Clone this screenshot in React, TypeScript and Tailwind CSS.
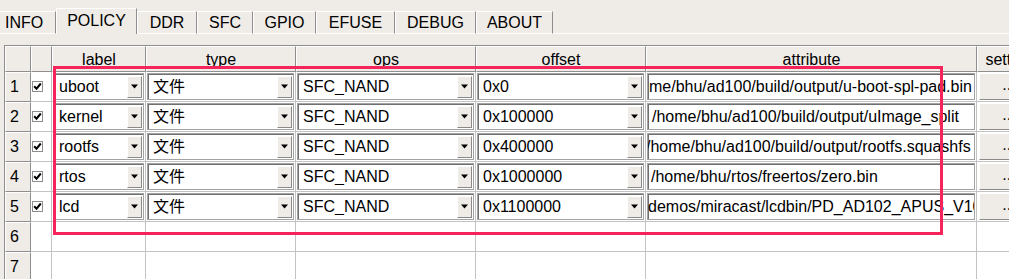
import React from 'react';

const tabs = [
  { name: 'INFO', w: 56 },
  { name: 'POLICY', w: 81, active: true },
  { name: 'DDR', w: 60 },
  { name: 'SFC', w: 56 },
  { name: 'GPIO', w: 63 },
  { name: 'EFUSE', w: 79 },
  { name: 'DEBUG', w: 81 },
  { name: 'ABOUT', w: 77 },
];

const rows = [
  { label: 'uboot', offset: '0x0', attr: 'me/bhu/ad100/build/output/u-boot-spl-pad.bin', pad: 'pl-[1px]' },
  { label: 'kernel', offset: '0x100000', attr: '/home/bhu/ad100/build/output/uImage_split', pad: 'pl-[4px]' },
  { label: 'rootfs', offset: '0x400000', attr: '/home/bhu/ad100/build/output/rootfs.squashfs', pad: 'pl-0 -ml-[2px]' },
  { label: 'rtos', offset: '0x1000000', attr: '/home/bhu/rtos/freertos/zero.bin', pad: 'pl-[3px]' },
  { label: 'lcd', offset: '0x1100000', attr: 'demos/miracast/lcdbin/PD_AD102_APUS_V10_800x480.bin', pad: 'pl-0' },
];

const gridCols = 'grid grid-cols-[26px_21px_94px_150px_180px_170px_331px_64px]';
const headBevel = 'border-t border-l border-t-white border-l-white border-r border-b border-r-[#8e8e8e] border-b-[#8e8e8e] bg-[#efebe7]';
const cellLine = 'border-r border-b border-[#c3c3c3] bg-white';

function Arrow() {
  return (
    <svg width="7" height="5" viewBox="0 0 7 5">
      <path d="M0 0.5h7L3.5 4.5z" fill="#000" />
    </svg>
  );
}

function Combo({ value }: { value: string }) {
  return (
    <div className="m-[1px] flex h-[27px] items-center border border-[#a3a3a3] bg-white shadow-[inset_1px_1px_0_#707070]">
      <span className="flex-1 overflow-hidden whitespace-nowrap pl-[5px] leading-none">{value}</span>
      <div className="mr-[1px] flex h-[22px] w-[15px] items-center justify-center border border-t-white border-l-white border-b-[#8a8a8a] border-r-[#8a8a8a] bg-[#efebe7]">
        <Arrow />
      </div>
    </div>
  );
}

function Field({ value, pad }: { value: string; pad: string }) {
  return (
    <div className="m-[1px] flex h-[27px] items-center overflow-hidden border border-[#a3a3a3] bg-white shadow-[inset_1px_1px_0_#707070]">
      <span className={`whitespace-nowrap leading-none ${pad}`}>{value}</span>
    </div>
  );
}

function Check() {
  return (
    <div className="flex h-[11px] w-[11px] items-center justify-center border border-[#8e8e8e] bg-white">
      <svg width="9" height="9" viewBox="0 0 9 9">
        <path d="M1.2 4.2l2.3 2.5L7.8 1.5" stroke="#000" strokeWidth="2" fill="none" />
      </svg>
    </div>
  );
}

export default function App() {
  return (
    <div
      className="relative h-[279px] w-[1009px] overflow-hidden bg-[#efebe7] text-[16px] text-black"
      style={{ fontFamily: '"Liberation Sans", "Noto Sans CJK SC", sans-serif' }}
    >
      {/* tab strip */}
      <div className="flex h-[34px] items-end">
        {tabs.map((t) =>
          t.active ? (
            <div
              key={t.name}
              style={{ width: t.w }}
              className="flex h-[26px] shrink-0 items-center justify-center border-t border-l border-r border-t-white border-l-white border-r-[#8e8e8e] pb-[1px]"
            >
              {t.name}
            </div>
          ) : (
            <div
              key={t.name}
              style={{ width: t.w }}
              className={`flex h-[23px] shrink-0 items-center border-t border-r border-b border-t-white border-r-[#8e8e8e] border-b-white ${
                t.name === 'INFO' ? 'justify-start pl-[5px]' : 'justify-center border-l border-l-white'
              }`}
            >
              {t.name}
            </div>
          )
        )}
        <div className="h-[1px] flex-1 bg-white" />
      </div>

      {/* table */}
      <div className="ml-[4px] mt-[11px] w-max border-l border-t border-[#8e8e8e]">
        <div className={`${gridCols} h-[26px]`}>
          <div className={headBevel} />
          <div className={headBevel} />
          {['label', 'type', 'ops', 'offset', 'attribute', 'setting'].map((h) => (
            <div key={h} className={`${headBevel} flex items-center justify-center overflow-hidden whitespace-nowrap pt-[2px]`}>
              {h}
            </div>
          ))}
        </div>

        {rows.map((r, i) => (
          <div key={r.label} className={`${gridCols} h-[30px]`}>
            <div className={`${headBevel} flex items-center pl-[4px]`}>{i + 1}</div>
            <div className={`${cellLine} flex items-center pl-[1px]`}>
              <Check />
            </div>
            <div className={cellLine}>
              <Combo value={r.label} />
            </div>
            <div className={cellLine}>
              <Combo value="文件" />
            </div>
            <div className={cellLine}>
              <Combo value="SFC_NAND" />
            </div>
            <div className={cellLine}>
              <Combo value={r.offset} />
            </div>
            <div className={cellLine}>
              <Field value={r.attr} pad={r.pad} />
            </div>
            <div className={`${cellLine} pl-[1px]`}>
              <div className="m-[1px] flex h-[27px] items-center justify-center border border-t-white border-l-white border-b-[#8a8a8a] border-r-[#8a8a8a] bg-[#efebe7] pb-[3px]">
                ...
              </div>
            </div>
          </div>
        ))}

        {[6, 7].map((n) => (
          <div key={n} className={`${gridCols} h-[30px]`}>
            <div className={`${headBevel} flex items-center pl-[4px]`}>{n}</div>
            {[0, 1, 2, 3, 4, 5, 6].map((c) => (
              <div key={c} className={cellLine} />
            ))}
          </div>
        ))}
      </div>

      {/* red annotation box */}
      <div className="absolute left-[53px] top-[66px] h-[169px] w-[890px] border-[3px] border-[#f5245a]" />
    </div>
  );
}
